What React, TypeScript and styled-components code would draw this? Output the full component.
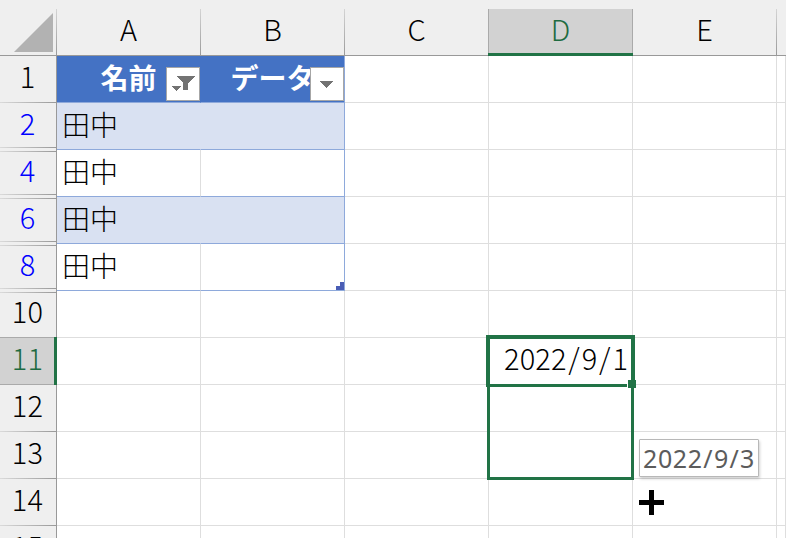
import React from "react";
import styled, { createGlobalStyle, css } from "styled-components";

const GREEN = "#217346";
const GRID = "#dedede";
const TABLE_LINE = "#8ea9db";

const GlobalStyle = createGlobalStyle`
  body {
    margin: 0;
    overflow: hidden;
    background: #fff;
    font-family: "Noto Sans CJK JP", sans-serif;
    font-weight: 300;
    color: #000;
  }
`;

const Sheet = styled.div`
  position: relative;
  display: flex;
  flex-direction: column;
  width: 786px;
  height: 538px;
  overflow: hidden;
  background: #fff;
`;

const HeaderBar = styled.div`
  display: grid;
  flex: none;
  grid-template-columns: 57px repeat(5, 144px) 9px;
  height: 47px;
  padding-top: 9px;
  background: linear-gradient(#999, #999) bottom / 100% 1px no-repeat #efefef;
`;

const Corner = styled.div`
  display: flex;
  justify-content: flex-end;
  align-items: flex-end;
  box-sizing: border-box;
  padding: 0 4px 4px 0;
  background: linear-gradient(#d4d4d4, #999) right / 1px 100% no-repeat;
`;

const ColumnHead = styled.div<{ $active?: boolean }>`
  box-sizing: border-box;
  height: 47px;
  padding-right: 1px;
  line-height: 39px;
  font-size: 29px;
  text-align: center;
  background: linear-gradient(#d4d4d4, #999) right / 1px 100% no-repeat;
  ${(p) =>
    p.$active &&
    css`
      margin-left: -1px;
      padding-left: 1px;
      color: #1e6b41;
      background:
        linear-gradient(${GREEN}, ${GREEN}) bottom / 100% 3px no-repeat,
        linear-gradient(#aaa, #aaa) left / 1px 100% no-repeat,
        linear-gradient(#aaa, #aaa) right / 1px 100% no-repeat,
        #d2d2d2;
    `}
`;

const Row = styled.div`
  display: grid;
  flex: none;
  grid-template-columns: 57px repeat(5, 144px) 9px;
  height: 47px;
`;

const RowHead = styled.div<{ $filtered?: boolean; $active?: boolean; $gap?: boolean }>`
  position: relative;
  box-sizing: border-box;
  height: 47px;
  padding-right: 1px;
  line-height: 38px;
  font-size: 29px;
  text-align: center;
  color: ${(p) => (p.$filtered ? "#0000ff" : "#000")};
  border-right: 1px solid #999;
  background: ${(p) =>
    p.$gap ? "#efefef" : "linear-gradient(90deg, #dadada, #999) bottom / 100% 1px no-repeat #efefef"};
  ${(p) =>
    p.$active &&
    css`
      color: #1e6b41;
      margin-top: -1px;
      height: 48px;
      padding-top: 1px;
      padding-right: 2px;
      border: 0;
      background:
        linear-gradient(${GREEN}, ${GREEN}) right / 3px 100% no-repeat,
        linear-gradient(#aaa, #aaa) top / 100% 1px no-repeat,
        linear-gradient(#aaa, #aaa) bottom / 100% 1px no-repeat,
        #d2d2d2;
    `}
`;

const HeadText = styled.span`
  letter-spacing: 0.2px;
`;

const HiddenRows = styled.span`
  position: absolute;
  z-index: 1;
  left: 0;
  right: 0;
  bottom: -2px;
  height: 5px;
  background:
    linear-gradient(90deg, #dadada, #999) top / 100% 1px no-repeat,
    linear-gradient(90deg, #dadada, #999) bottom / 100% 1px no-repeat,
    #efefef;
`;

type Kind = "plain" | "head" | "band" | "white";

const Cell = styled.div<{ $kind: Kind; $last?: boolean }>`
  position: relative;
  box-sizing: border-box;
  height: 47px;
  padding-left: 5px;
  line-height: 43px;
  font-size: 28px;
  white-space: nowrap;
  border-right: 1px solid
    ${(p) =>
      p.$last && p.$kind !== "plain"
        ? TABLE_LINE
        : p.$kind === "head"
        ? "#4472c4"
        : p.$kind === "band"
        ? "#d9e1f2"
        : GRID};
  border-bottom: 1px solid ${(p) => (p.$kind === "plain" ? GRID : TABLE_LINE)};
  background: ${(p) => (p.$kind === "head" ? "#4472c4" : p.$kind === "band" ? "#d9e1f2" : "#fff")};
  ${(p) =>
    p.$kind === "head" &&
    css`
      padding: 0;
      color: #fff;
      font-weight: 700;
      font-size: 28px;
      line-height: 43px;
      text-align: center;
    `}
`;

const FilterButton = styled.span`
  position: absolute;
  right: 0;
  bottom: 1px;
  width: 32px;
  height: 32px;
  border: 1px solid #a6a6a6;
  background: #fff;
  svg {
    display: block;
  }
`;

const TableHandle = styled.svg`
  position: absolute;
  right: 0;
  bottom: 0;
`;

const DateText = styled.div`
  padding-right: 4px;
  line-height: 39px;
  font-size: 29px;
  letter-spacing: 0.1px;
  text-align: right;
`;

const Slash = styled.span`
  padding: 0 1.8px;
`;

const FillRange = styled.div`
  position: absolute;
  z-index: 2;
  left: -2px;
  top: -2px;
  width: 141px;
  height: 138px;
  border: 3px solid ${GREEN};
`;

const ActiveCell = styled.div`
  position: absolute;
  z-index: 3;
  left: -3px;
  top: -3px;
  width: 141px;
  height: 45px;
  border: 4px solid ${GREEN};
  border-bottom-width: 3px;
`;

const FillHandle = styled.div`
  position: absolute;
  right: -5px;
  bottom: -4px;
  width: 8px;
  height: 8px;
  background: ${GREEN};
  box-shadow: -1px 0 0 #fff;
`;

const FillTip = styled.div`
  position: absolute;
  z-index: 4;
  left: 639px;
  top: 439px;
  width: 118px;
  height: 36px;
  border: 1px solid #b8b8b8;
  border-radius: 1px;
  background: #fff;
  box-shadow: 1px 2px 3px rgba(0, 0, 0, 0.18);
  color: #5c5c5c;
  font: 400 25px/37px "Noto Sans", sans-serif;
  letter-spacing: 0.6px;
  text-align: center;
  white-space: nowrap;
`;

const TipSlash = styled.span`
  padding: 0 0.7px;
`;

const CrossCursor = styled.svg`
  position: absolute;
  z-index: 5;
  left: 639px;
  top: 490px;
`;

const columns = ["A", "B", "C", "D", "E"];

const rows: { n: number; filtered?: boolean; gap?: boolean; kind: Kind; name?: string }[] = [
  { n: 1, kind: "head", name: "名前" },
  { n: 2, filtered: true, gap: true, kind: "band", name: "田中" },
  { n: 4, filtered: true, gap: true, kind: "white", name: "田中" },
  { n: 6, filtered: true, gap: true, kind: "band", name: "田中" },
  { n: 8, filtered: true, gap: true, kind: "white", name: "田中" },
  { n: 10, kind: "plain" },
  { n: 11, kind: "plain" },
  { n: 12, kind: "plain" },
  { n: 13, kind: "plain" },
  { n: 14, kind: "plain" },
  { n: 15, kind: "plain" },
];

const FilteredIcon = () => (
  <FilterButton>
    <svg width="32" height="32" fill="#737373" shapeRendering="crispEdges">
      <path d="M9 8H28L21 15V22H16V15Z M5 18H14L9.5 23Z" />
    </svg>
  </FilterButton>
);

const DropdownIcon = () => (
  <FilterButton>
    <svg width="32" height="32" fill="#737373" shapeRendering="crispEdges">
      <path d="M9 13H22L15.5 20Z" />
    </svg>
  </FilterButton>
);

export default function App() {
  return (
    <Sheet>
      <GlobalStyle />
      <HeaderBar>
        <Corner>
          <svg width="39" height="39">
            <path d="M39 0V39H0Z" fill="#b2b2b2" />
          </svg>
        </Corner>
        {columns.map((c) => (
          <ColumnHead key={c} $active={c === "D"}>
            {c}
          </ColumnHead>
        ))}
      </HeaderBar>
      {rows.map((r) => (
        <Row key={r.n}>
          <RowHead $filtered={r.filtered} $gap={r.gap} $active={r.n === 11}>
            <HeadText>{r.n}</HeadText>
            {r.gap && <HiddenRows />}
          </RowHead>
          <Cell $kind={r.kind}>
            {r.name}
            {r.n === 1 && <FilteredIcon />}
          </Cell>
          <Cell $kind={r.kind} $last>
            {r.n === 1 && (
              <>
                データ
                <DropdownIcon />
              </>
            )}
            {r.n === 8 && (
              <TableHandle width="8" height="8" fill="#4a5db5">
                <path d="M4 0H8V8H0V4H4Z" />
              </TableHandle>
            )}
          </Cell>
          <Cell $kind="plain" />
          <Cell $kind="plain">
            {r.n === 11 && (
              <>
                <DateText>
                  2022<Slash>/</Slash>9<Slash>/</Slash>1
                </DateText>
                <FillRange />
                <ActiveCell>
                  <FillHandle />
                </ActiveCell>
              </>
            )}
          </Cell>
          <Cell $kind="plain" />
          <Cell $kind="plain" />
        </Row>
      ))}
      <FillTip>
        2022<TipSlash>/</TipSlash>9<TipSlash>/</TipSlash>3
      </FillTip>
      <CrossCursor width="25" height="25">
        <path d="M10 0H15V10H25V15H15V25H10V15H0V10H10Z" fill="#000" />
      </CrossCursor>
    </Sheet>
  );
}
